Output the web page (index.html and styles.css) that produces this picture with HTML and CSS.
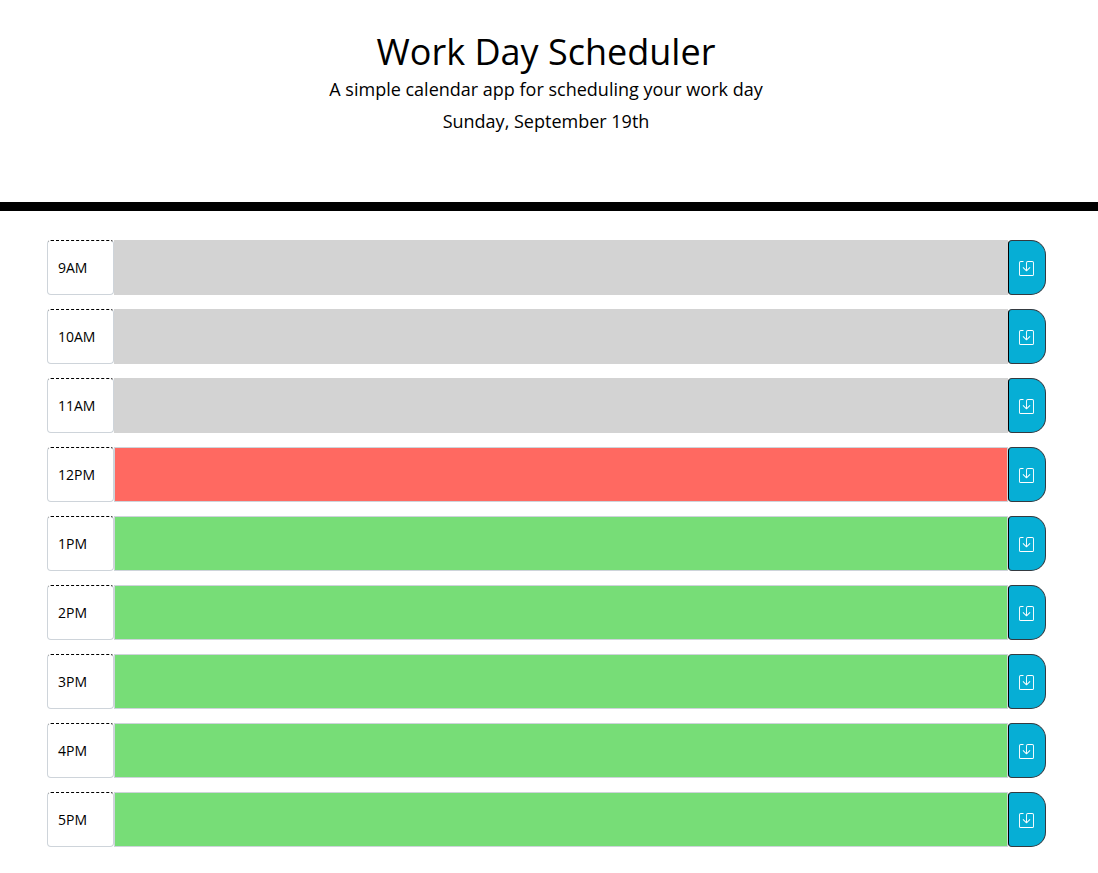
FILE: index.html
```
<!DOCTYPE html>
<html lang="en">
<head>
<meta charset="utf-8">
<meta name="viewport" content="width=device-width, initial-scale=1">
<title>Work Day Scheduler</title>
<link rel="stylesheet" href="styles.css">
</head>
<body>
<header class="masthead">
  <h1 class="title">Work Day Scheduler</h1>
  <p class="lead">A simple calendar app for scheduling your work day</p>
  <p class="lead">Sunday, September 19th</p>
</header>
<main class="planner" id="planner"></main>
<template id="row">
  <div class="time-block">
    <label class="hour"></label>
    <textarea class="entry"></textarea>
    <button class="save" type="button" aria-label="Save">
      <svg width="15" height="15" viewBox="0 0 16 16" fill="currentColor" aria-hidden="true">
        <path d="M2 1a1 1 0 0 0-1 1v12a1 1 0 0 0 1 1h12a1 1 0 0 0 1-1V2a1 1 0 0 0-1-1H9.500a1 1 0 0 0-1 1v7.293l2.646-2.647a.5.5 0 0 1 .708.708l-3.500 3.500a.5.5 0 0 1-.708 0l-3.500-3.500a.5.5 0 1 1 .708-.708L7.500 9.293V2a2 2 0 0 1 2-2H14a2 2 0 0 1 2 2v12a2 2 0 0 1-2 2H2a2 2 0 0 1-2-2V2a2 2 0 0 1 2-2h2.500a.5.5 0 0 1 0 1H2z"/>
      </svg>
    </button>
  </div>
</template>
<script src="script.js"></script>
</body>
</html>
```
FILE: styles.css
```
* { box-sizing: border-box; }

body {
  margin: 0;
  background: #fff;
  color: #000;
  font-family: "Open Sans", sans-serif;
  font-size: 14px;
  line-height: 20px;
}

.masthead {
  padding: 30px 6px 65px 0;
  border-bottom: 9px solid #000;
  text-align: center;
}

.title {
  margin: 0;
  font-size: 36px;
  font-weight: 400;
  line-height: 43px;
}

.lead {
  margin: 0;
  font-size: 18px;
  line-height: 32px;
}

.planner {
  display: grid;
  gap: 14px;
  padding: 29px 52px 24px 47px;
}

.time-block {
  display: flex;
  height: 55px;
}

.hour {
  display: flex;
  align-items: center;
  width: 67px;
  padding-left: 10px;
  border: 1px solid #ced4da;
  border-top: 1px dashed #000;
  border-radius: 4px;
}

.entry {
  flex: 1;
  min-width: 0;
  padding: 6px 12px;
  border: 1px solid #ced4da;
  border-radius: 0;
  font: inherit;
  resize: none;
}

.past { background: #d3d3d3; border-color: #d3d3d3; }
.present { background: #ff6961; }
.future { background: #77dd77; }

.save {
  display: flex;
  align-items: center;
  justify-content: center;
  width: 38px;
  padding: 2px 1px 0 0;
  border: 1px solid #343a40;
  border-left-color: #000;
  border-radius: 4px 15px 15px 4px;
  background: #06aed5;
  color: #fff;
}
```
FILE: script.js
```
const hours = [
  ["9AM", "past"], ["10AM", "past"], ["11AM", "past"],
  ["12PM", "present"],
  ["1PM", "future"], ["2PM", "future"], ["3PM", "future"],
  ["4PM", "future"], ["5PM", "future"]
];
const planner = document.getElementById("planner");
const template = document.getElementById("row");

for (const [name, state] of hours) {
  const row = template.content.cloneNode(true);
  const label = row.querySelector(".hour");
  const entry = row.querySelector(".entry");
  entry.id = "entry-" + name;
  entry.classList.add(state);
  label.htmlFor = entry.id;
  label.textContent = name;
  row.querySelector(".save").setAttribute("aria-label", "Save " + name);
  planner.append(row);
}
```
